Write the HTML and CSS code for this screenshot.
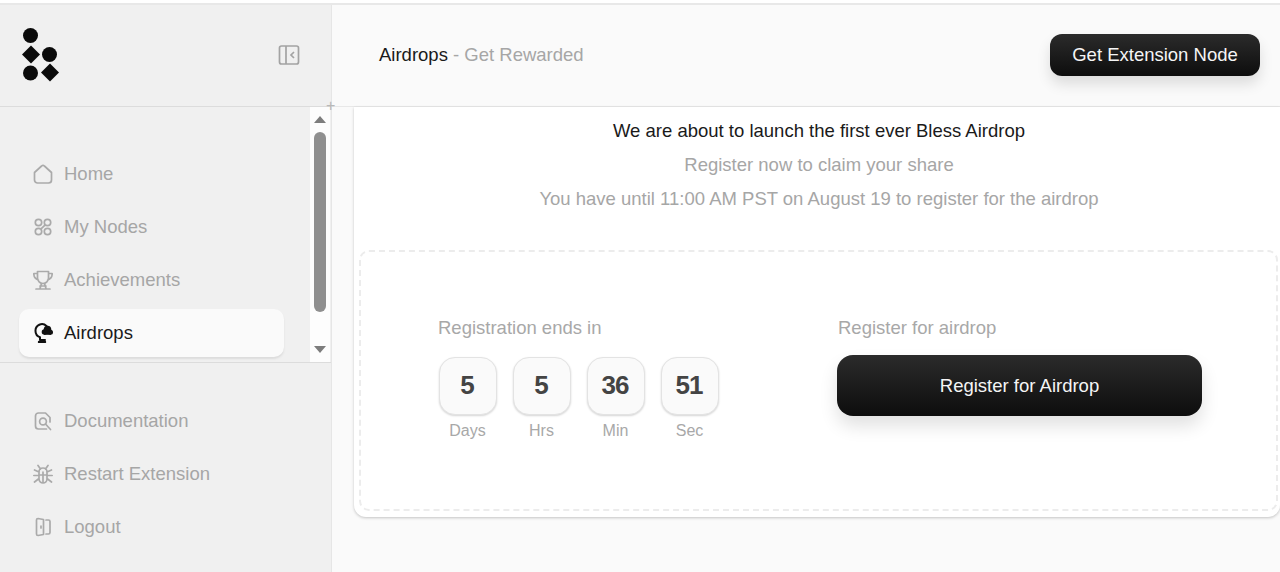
FILE: index.html
```html
<!DOCTYPE html>
<html lang="en">
<head>
<meta charset="utf-8">
<title>Airdrops</title>
<link rel="stylesheet" href="styles.css">
</head>
<body>
<div class="app">
  <aside class="sidebar">
    <div class="brand">
      <svg class="logo" viewBox="0 0 37 54"><circle cx="8.500" cy="7.500" r="7.500"/><path d="M9 17.500 18 26.500 9 35.500 0 26.500z"/><circle cx="27.500" cy="26.500" r="7.500"/><circle cx="8.500" cy="45" r="7.500"/><path d="M28 35.500 37 44.500 28 53.500 19 44.500z"/></svg>
      <svg class="collapse" width="22" height="22" viewBox="0 0 22 22" fill="none" stroke="#a3a3a3" stroke-width="1.700"><rect x="1.500" y="2" width="19" height="18" rx="2"/><path d="M8 2v18M16 8l-3 3 3 3"/></svg>
    </div>
    <div class="scroller">
      <nav class="nav">
        <a class="item"><svg class="ic" viewBox="0 0 20 20"><path d="M1.500 8.500 8.600 2a2 2 0 0 1 2.800 0l7.100 6.500V16a3 3 0 0 1-3 3h-11a3 3 0 0 1-3-3z"/></svg>Home</a>
        <a class="item"><svg class="ic" viewBox="0 0 20 20"><circle cx="5.500" cy="5.500" r="3.200"/><circle cx="14.500" cy="5.500" r="3.200"/><circle cx="5.500" cy="14.500" r="3.200"/><circle cx="14.500" cy="14.500" r="3.200"/><path d="M8.300 11.700 11.700 8.300"/></svg>My Nodes</a>
        <a class="item"><svg class="ic" viewBox="0 0 20 20"><path d="M4.500 1.500h11v6.500a5.500 5.500 0 0 1-11 0zM4.500 3.500H.8c0 3.500 1.500 5.500 4.500 6.500M15.500 3.500h3.700c0 3.500-1.500 5.500-4.500 6.500M8.500 13.500l-1.500 5M11.500 13.500l1.500 5M3 19h14M7 16h6"/></svg>Achievements</a>
        <a class="item active"><svg class="ic" viewBox="0 0 20 20"><path d="M13.500 3A6.500 6.500 0 0 0 2.500 8a6.500 6.500 0 0 0 4.500 6.200V17h5" stroke-width="2"/><path d="M6 19h6" stroke-width="2.400"/><circle class="cloud" cx="11.500" cy="9" r="2.800"/><circle class="cloud" cx="14.500" cy="6.500" r="3.800"/><circle class="cloud" cx="17.500" cy="9.200" r="2.500"/><rect class="cloud" x="11" y="8" width="7" height="3.800"/></svg>Airdrops</a>
      </nav>
      <div class="scrollbar">
        <span class="arrow up"></span>
        <span class="thumb"></span>
        <span class="arrow down"></span>
      </div>
    </div>
    <nav class="nav-foot">
      <a class="item"><svg class="ic" viewBox="0 0 20 20"><path d="M17 11V6.500L12.500 2H5.500a3 3 0 0 0-3 3v10a3 3 0 0 0 3 3h8"/><circle cx="10" cy="10.500" r="3.400"/><path d="m12.500 13 5 5.500"/></svg>Documentation</a>
      <a class="item"><svg class="ic" viewBox="0 0 20 20"><path d="M6 8a4 4 0 0 1 8 0v7a4 4 0 0 1-8 0zM10 8v11M6 11h8M7.500 5 5 1.500M12.500 5 15 1.500M6 8 1.500 6M14 8l4.500-2M6 11.500H.8M14 11.500h5.200M6 14.500l-4.500 3.500M14 14.500l4.500 3.500"/></svg>Restart Extension</a>
      <a class="item"><svg class="ic" viewBox="0 0 20 20"><path d="M10.500 2.500 5 1.500A1.500 1.500 0 0 0 3.500 3v14A1.500 1.500 0 0 0 5 18.500l5.500-1zM13 3h2.500A1.500 1.500 0 0 1 17 4.500v11a1.500 1.500 0 0 1-1.500 1.500H13M8 9v2"/></svg>Logout</a>
    </nav>
  </aside>
  <main class="main">
    <header class="topbar">
      <div class="crumb"><span class="crumb-strong">Airdrops</span> - Get Rewarded</div>
      <button class="btn btn-head">Get Extension Node</button>
    </header>
    <section class="panel">
      <div class="intro">
        <p class="lead">We are about to launch the first ever Bless Airdrop</p>
        <p>Register now to claim your share</p>
        <p>You have until 11:00 AM PST on August 19 to register for the airdrop</p>
      </div>
      <div class="card-inner">
        <div class="timer">
          <div class="label">Registration ends in</div>
          <div class="cells">
            <div class="cell"><div class="num">5</div><div class="unit">Days</div></div>
            <div class="cell"><div class="num">5</div><div class="unit">Hrs</div></div>
            <div class="cell"><div class="num">36</div><div class="unit">Min</div></div>
            <div class="cell"><div class="num">51</div><div class="unit">Sec</div></div>
          </div>
        </div>
        <div class="register">
          <div class="label">Register for airdrop</div>
          <button class="btn btn-main">Register for Airdrop</button>
        </div>
      </div>
    </section>
  </main>
  <span class="plus">+</span>
</div>
</body>
</html>
```
FILE: styles.css
```css
* { box-sizing: border-box; }
html, body { margin: 0; height: 100%; overflow: hidden; }
body { font-family: "Liberation Sans", Arial, sans-serif; font-size: 18.500px; color: #a6a6a6; background: #fafafa; }
p { margin: 0; }
.app { position: relative; display: flex; height: 572px; padding-top: 4px; background: #fff; }
.app::before { content: ""; position: absolute; left: 0; right: 0; top: 3px; height: 2px; background: #e8e8e8; }
.sidebar { width: 332px; flex: none; display: flex; flex-direction: column; background: #f0f0f0; border-right: 1px solid #e6e6e6; }
.brand { height: 103px; flex: none; display: flex; align-items: flex-start; justify-content: space-between; padding: 24px 31px 0 22px; border-bottom: 1px solid #dcdcdc; }
.logo { fill: #0b0b0b; width: 37px; height: 54px; }
.collapse { margin-top: 16px; }
.scroller { height: 256px; flex: none; display: flex; border-bottom: 1px solid #dcdcdc; }
.nav { flex: 1; padding: 43px 26px 0 19px; display: flex; flex-direction: column; gap: 5px; }
.item { display: flex; align-items: center; gap: 11px; height: 48px; padding-left: 14px; color: #a6a6a6; }
.ic { width: 20px; height: 20px; flex: none; fill: none; stroke: #aaa; stroke-width: 1.700; stroke-linecap: round; stroke-linejoin: round; }
.item.active { color: #1a1a1a; background: #fafafa; border-radius: 10px; box-shadow: 0 2px 2px #dcdcdc; }
.item.active .ic { stroke: #111; }
.item.active .ic .cloud { fill: #111; stroke: none; }
.scrollbar { width: 20px; margin-right: 1px; flex: none; background: #fdfdfd; display: flex; flex-direction: column; align-items: center; padding-top: 9px; }
.thumb { width: 12px; height: 180px; margin: 9px 0 34px; background: #8f8f8f; border-radius: 6px; }
.arrow { width: 0; height: 0; border-left: 6px solid transparent; border-right: 6px solid transparent; }
.arrow.up { border-bottom: 7px solid #7d7d7d; }
.arrow.down { border-top: 7px solid #7d7d7d; }
.nav-foot { padding: 34px 27px 0 19px; display: flex; flex-direction: column; gap: 5px; }
.main { flex: 1; min-width: 0; display: flex; flex-direction: column; background: #fafafa; }
.topbar { height: 103px; flex: none; display: flex; align-items: center; justify-content: space-between; padding: 0 20px 1px 47px; background: #fafafa; border-bottom: 1px solid #e8e8e8; }
.crumb-strong { color: #1a1a1a; }
.btn { border: 0; color: #f5f5f5; font: inherit; background: linear-gradient(#2b2b2b, #0d0d0d); }
.btn-head { width: 210px; height: 42px; border-radius: 12px; box-shadow: 0 8px 14px rgba(0,0,0,.12); }
.panel { margin-left: 22px; height: 410px; padding-bottom: 6px; background: #fff; border-radius: 0 0 12px 12px; box-shadow: 0 1px 3px rgba(0,0,0,.22); }
.intro { height: 143px; padding: 13px 0 0 4px; text-align: center; display: flex; flex-direction: column; gap: 13px; line-height: 21px; }
.lead { color: #1a1a1a; }
.card-inner { height: 261px; margin: 0 2px 0 5px; display: flex; padding: 65px 0 0 77px; gap: 118px; border: 2px dashed #ececec; border-radius: 10px; }
.timer { width: 282px; }
.label { line-height: 21px; color: #a8a8a8; }
.cells { display: flex; gap: 16px; margin: 19px 0 0 1px; }
.cell { width: 58px; text-align: center; }
.num { height: 58px; padding: 0 2px 2px 0; display: flex; align-items: center; justify-content: center; font-size: 26px; letter-spacing: -1px; font-weight: 700; color: #444; background: #fafafa; border: 1px solid #e3e3e3; border-radius: 16px; box-shadow: 0 1px 2px #d5d5d5; }
.unit { margin: 7px 1px 0 0; font-size: 16px; line-height: 18px; color: #a8a8a8; }
.register { width: 366px; }
.btn-main { display: block; width: 365px; height: 61px; margin: 17px 0 0 -1px; border-radius: 16px; box-shadow: 0 10px 18px rgba(0,0,0,.12); }
.plus { position: absolute; left: 326px; top: 97px; color: #b8b8b8; font-size: 16px; line-height: 18px; }
```
